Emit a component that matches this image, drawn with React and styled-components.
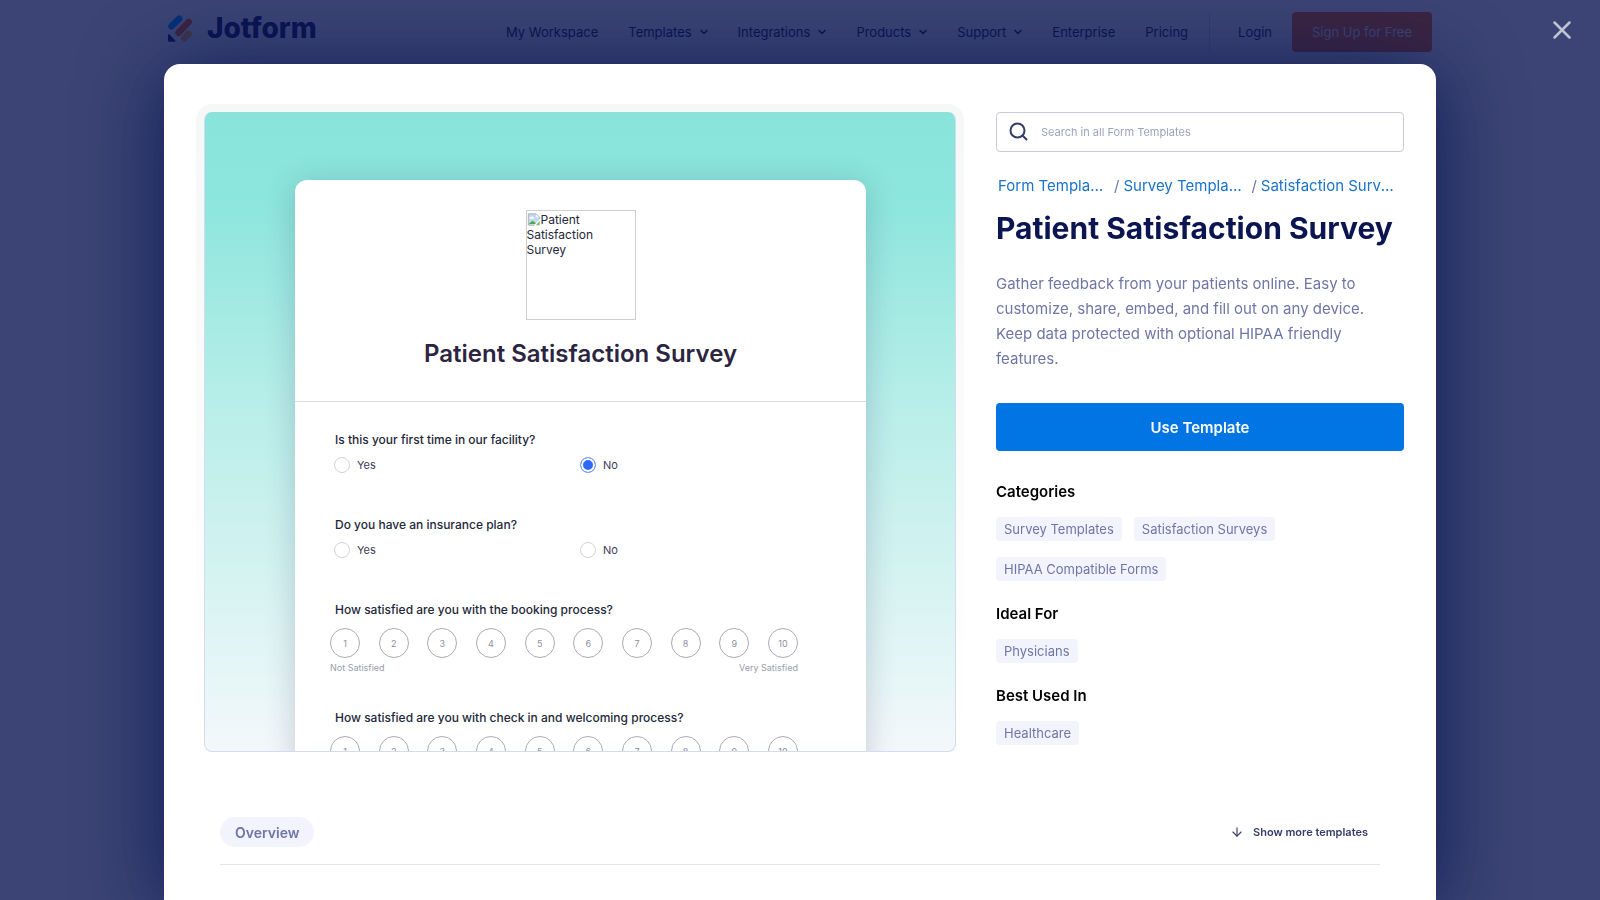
import React from 'react';
import styled, { createGlobalStyle } from 'styled-components';
import { ArrowDown, ChevronDown, X } from 'lucide-react';

const navLinks = [
  { label: 'My Workspace' },
  { label: 'Templates', menu: true },
  { label: 'Integrations', menu: true },
  { label: 'Products', menu: true },
  { label: 'Support', menu: true },
  { label: 'Enterprise' },
  { label: 'Pricing' },
];

const crumbs = ['Form Templates', 'Survey Templates', 'Satisfaction Surveys'];

const tagGroups = [
  {
    title: 'Categories',
    tags: ['Survey Templates', 'Satisfaction Surveys', 'HIPAA Compatible Forms'],
  },
  { title: 'Ideal For', tags: ['Physicians'] },
  { title: 'Best Used In', tags: ['Healthcare'] },
];

const yesNoQuestions = [
  { id: 'first', text: 'Is this your first time in our facility?', answer: 'No' },
  { id: 'plan', text: 'Do you have an insurance plan?', answer: '' },
];

const scaleQuestions = [
  { id: 'booking', text: 'How satisfied are you with the booking process?' },
  {
    id: 'welcome',
    text: 'How satisfied are you with check in and welcoming process?',
  },
];

const Logo = () => (
  <LogoLink href='#home'>
    <svg width='24' height='27' viewBox='0 0 24 27' fill='none'>
      <g strokeWidth='6.500' strokeLinecap='round'>
        <path d='M3.500 11.200 11.300 3.700' stroke='#0099ff' />
        <path d='M10.500 17.800 20.700 7' stroke='#ff6100' />
        <path d='M16.300 23 20.500 18.900' stroke='#ffb629' />
      </g>
      <path d='M0 20v5.400c0 .8.500 1.300 1.300 1.300h5.300c.8 0 1.100-.8.500-1.400L1.500 19.500c-.6-.6-1.500-.2-1.500.5Z' fill='#0a1551' />
    </svg>
    <span>Jotform</span>
  </LogoLink>
);

const BrokenImage = () => (
  <svg width='16' height='16' viewBox='0 0 16 16'>
    <path d='M1.500 1.500h9l4 4V8L9 13.500H1.500Z' fill='#c4d8f5' />
    <path d='M10.500 1.500v4h4Z' fill='#fff' />
    <path d='M3 6.500c0-1 1-1.500 2-1.300.5-1 2.400-.7 2.400.5.800 0 1 .9.500 1.300H3.500Z' fill='#fff' />
    <path d='M1.500 13.500 6 9.500l3 1.500 1 1.500-1.500 1Z' fill='#4fa64a' />
    <path d='M14.500 9.500v5H10Z' fill='#7cbd6c' />
    <path d='M8.500 14.500h-7v-13h9l4 4v2' fill='none' stroke='#a9abb0' />
  </svg>
);

const YesNo = ({ question }) => (
  <Question>
    <legend>{question.text}</legend>
    <Options>
      {['Yes', 'No'].map((option) => (
        <Option key={option}>
          <input
            type='radio'
            name={question.id}
            value={option}
            defaultChecked={question.answer === option}
          />
          {option}
        </Option>
      ))}
    </Options>
  </Question>
);

const Scale = ({ question }) => (
  <Question>
    <legend>{question.text}</legend>
    <ScaleBody>
      <ScaleRow>
        {Array.from({ length: 10 }, (_, i) => (
          <ScaleItem key={i}>
            <input type='radio' name={question.id} value={i + 1} />
            {i + 1}
          </ScaleItem>
        ))}
      </ScaleRow>
      <ScaleEnds>
        <span>Not Satisfied</span>
        <span>Very Satisfied</span>
      </ScaleEnds>
    </ScaleBody>
  </Question>
);

const App = () => {
  return (
    <>
      <GlobalStyle />
      <Header>
        <Logo />
        <Nav>
          {navLinks.map(({ label, menu }) => (
            <a key={label} href='#nav'>
              {label}
              {menu && <ChevronDown size={12} strokeWidth={3} />}
            </a>
          ))}
        </Nav>
        <Account>
          <a href='#login'>Login</a>
          <SignUp type='button'>Sign Up for Free</SignUp>
        </Account>
      </Header>

      <Overlay>
        <Close type='button' aria-label='Close'>
          <X size={30} strokeWidth={2} />
        </Close>
        <Modal role='dialog' aria-label='Patient Satisfaction Survey'>
          <Columns>
            <PreviewFrame>
              <Preview>
                <FormCard>
                  <FormHead>
                    <Picture>
                      <BrokenImage />
                      Patient Satisfaction Survey
                    </Picture>
                    <h2>Patient Satisfaction Survey</h2>
                  </FormHead>
                  <Questions>
                    {yesNoQuestions.map((q) => (
                      <YesNo key={q.id} question={q} />
                    ))}
                    {scaleQuestions.map((q) => (
                      <Scale key={q.id} question={q} />
                    ))}
                  </Questions>
                </FormCard>
              </Preview>
            </PreviewFrame>

            <Details>
              <Search>
                <svg width='20' height='20' viewBox='0 0 20 20' fill='none'>
                  <circle cx='8.500' cy='8.500' r='7' stroke='#343c6a' strokeWidth='2' />
                  <path d='m13.500 13.500 4 4' stroke='#343c6a' strokeWidth='2' strokeLinecap='round' />
                </svg>
                <input
                  type='text'
                  aria-label='Search in all Form Templates'
                  placeholder='Search in all Form Templates'
                />
              </Search>
              <Breadcrumbs>
                {crumbs.map((crumb) => (
                  <li key={crumb}>
                    <a href='#crumb'>{crumb}</a>
                  </li>
                ))}
              </Breadcrumbs>
              <h1>Patient Satisfaction Survey</h1>
              <Description>
                Gather feedback from your patients online. Easy to customize,
                share, embed, and fill out on any device. Keep data protected
                with optional HIPAA friendly features.
              </Description>
              <UseButton type='button'>Use Template</UseButton>
              {tagGroups.map(({ title, tags }) => (
                <TagGroup key={title}>
                  <h3>{title}</h3>
                  <div>
                    {tags.map((tag) => (
                      <Tag key={tag} href='#tag'>
                        {tag}
                      </Tag>
                    ))}
                  </div>
                </TagGroup>
              ))}
            </Details>
          </Columns>

          <TabBar>
            <Tab type='button'>Overview</Tab>
            <MoreButton type='button'>
              <ArrowDown size={14} strokeWidth={2} />
              Show more templates
            </MoreButton>
          </TabBar>
        </Modal>
      </Overlay>
    </>
  );
};

export default App;

const GlobalStyle = createGlobalStyle`
  * {
    box-sizing: border-box;
  }
  body {
    margin: 0;
    overflow: hidden;
    background-color: #fff;
    color: #0a1551;
    font-family: Inter, 'Liberation Sans', sans-serif;
  }
  a {
    color: inherit;
    text-decoration: none;
  }
  button, input {
    font-family: inherit;
  }
  button {
    border: none;
    cursor: pointer;
  }
  h1, h2, h3, p, ul {
    margin: 0;
    padding: 0;
  }
`;

const Header = styled.header`
  display: flex;
  align-items: center;
  height: 64px;
  padding: 0 168px;
  font-size: 13px;
`;

const LogoLink = styled.a`
  display: flex;
  align-items: center;
  gap: 15px;
  height: 56px;
  align-self: flex-start;
  font-size: 28px;
  font-weight: 800;
`;

const Nav = styled.nav`
  display: flex;
  margin-left: auto;
  padding-right: 6px;
  a {
    display: flex;
    align-items: center;
    gap: 8px;
    padding: 0 15px;
  }
  svg {
    margin: 0 -2px;
  }
`;

const Account = styled.div`
  display: flex;
  align-items: center;
  gap: 20px;
  height: 40px;
  padding-left: 28px;
  border-left: 1px solid #d8dcf0;
`;

const SignUp = styled.button`
  height: 40px;
  width: 140px;
  border-radius: 4px;
  background-color: #ff6100;
  color: #fff;
  font-size: 13px;
`;

const Overlay = styled.div`
  position: fixed;
  inset: 0;
  display: flex;
  padding: 64px 164px 0;
  overflow: hidden;
  background-color: rgba(10, 21, 81, 0.8);
`;

const Close = styled.button`
  position: absolute;
  top: 15px;
  right: 23px;
  display: flex;
  padding: 0;
  background: none;
  color: #c0c3d6;
`;

const Modal = styled.div`
  flex: 1;
  min-width: 0;
  padding: 48px 32px 0 40px;
  border-radius: 16px 16px 0 0;
  background-color: #fff;
  box-shadow: 0 8px 80px rgba(10, 21, 81, 0.9);
`;

const Columns = styled.div`
  display: grid;
  grid-template-columns: minmax(0, 1fr) 408px;
  align-items: start;
  gap: 40px;
`;

const PreviewFrame = styled.div`
  margin: -8px -8px 0;
  padding: 8px 8px 0;
  border-radius: 16px 16px 0 0;
  background-image: linear-gradient(#f6f7f7, #fff);
`;

const Preview = styled.div`
  height: 640px;
  padding: 67px 89px 0 90px;
  overflow: hidden;
  border: 1px solid #d5dbee;
  border-top-color: #97ddd8;
  border-radius: 8px;
  background-image: linear-gradient(#88e4da, #8ee6dd 15%, #b8eee9 46%, #f3f8fa);
`;

const FormCard = styled.div`
  min-height: 640px;
  border-radius: 12px 12px 0 0;
  background-color: #fff;
  box-shadow: 0 4px 30px rgba(37, 45, 91, 0.22);
  color: #23283a;
`;

const FormHead = styled.div`
  display: flex;
  flex-direction: column;
  align-items: center;
  padding: 30px 0;
  border-bottom: 1px solid #dadce4;
  h2 {
    margin-top: 16px;
    line-height: 35px;
    font-size: 24px;
    font-weight: 600;
    color: #2c2541;
  }
`;

const Picture = styled.div`
  width: 110px;
  height: 110px;
  border: 1px solid #cfcfcf;
  padding-top: 1px;
  font-size: 12px;
  line-height: 15px;
  svg {
    float: left;
    width: 14px;
    height: 15px;
  }
`;

const Questions = styled.div`
  display: flex;
  flex-direction: column;
  gap: 37px;
  padding: 30px 68px 0 35px;
`;

const Question = styled.fieldset`
  min-width: 0;
  margin: 0;
  padding: 0;
  border: none;
  legend {
    padding: 0 5px;
    font-size: 12px;
    font-weight: 500;
    line-height: 16px;
  }
`;

const Options = styled.div`
  display: grid;
  grid-template-columns: 246px 1fr;
  padding: 8px 4px 7px;
`;

const Option = styled.label`
  display: flex;
  align-items: center;
  gap: 7px;
  height: 17px;
  font-size: 11px;
  color: #3f3a5a;
  input {
    appearance: none;
    width: 16px;
    height: 16px;
    margin: 0;
    border: 1px solid #d0d3dc;
    border-radius: 50%;
  }
  input:checked {
    border-color: #7d9cf5;
    background-color: #2e69ff;
    box-shadow: inset 0 0 0 2px #fff;
  }
`;

const ScaleBody = styled.div`
  padding-top: 10px;
`;

const ScaleRow = styled.div`
  display: flex;
  justify-content: space-between;
`;

const ScaleItem = styled.label`
  display: flex;
  align-items: center;
  justify-content: center;
  width: 30px;
  height: 30px;
  border: 1px solid #a9abb5;
  border-radius: 50%;
  font-size: 9px;
  color: #8d8f9c;
  input {
    position: absolute;
    opacity: 0;
    pointer-events: none;
  }
`;

const ScaleEnds = styled.div`
  display: flex;
  justify-content: space-between;
  padding-top: 4px;
  font-size: 9px;
  line-height: 11px;
  color: #9a9cac;
`;

const Details = styled.div`
  min-width: 0;
  h1 {
    margin-top: 10px;
    font-size: 30px;
    font-weight: 700;
    line-height: 40px;
    white-space: nowrap;
  }
`;

const Search = styled.label`
  display: flex;
  align-items: center;
  gap: 10px;
  height: 40px;
  padding: 0 12px;
  border: 1px solid #c8ccdb;
  border-radius: 4px;
  input {
    flex: 1;
    border: none;
    outline: none;
    font-size: 11px;
  }
  input::placeholder {
    color: #a0a2bd;
  }
`;

const Breadcrumbs = styled.ul`
  display: flex;
  margin-top: 22px;
  padding: 0 2px;
  list-style: none;
  font-size: 15px;
  line-height: 24px;
  color: #6f76a7;
  li {
    display: flex;
    white-space: nowrap;
  }
  li + li::before {
    content: '/';
    padding: 0 4px 0 8px;
  }
  a {
    max-width: 136px;
    overflow: hidden;
    text-overflow: ellipsis;
    color: #1a73c8;
  }
  li:first-child a {
    width: 108px;
  }
  li:nth-child(2) a {
    width: 120px;
  }
`;

const Description = styled.p`
  margin-top: 23px;
  font-size: 15px;
  line-height: 25px;
  color: #6f76a7;
`;

const UseButton = styled.button`
  width: 100%;
  height: 48px;
  margin: 32px 0 29px;
  border-radius: 4px;
  background-color: #0075e3;
  color: #fff;
  font-size: 15px;
  font-weight: 600;
`;

const TagGroup = styled.section`
  margin-bottom: 21px;
  &:last-child {
    margin-bottom: 0;
  }
  h3 {
    font-size: 15px;
    font-weight: 600;
    line-height: 24px;
    color: #000;
  }
  div {
    display: flex;
    flex-wrap: wrap;
    gap: 16px 12px;
    padding-top: 13px;
  }
`;

const Tag = styled.a`
  padding: 0 8px;
  border-radius: 4px;
  background-color: #f3f3fe;
  color: #6f76a7;
  font-size: 13px;
  line-height: 24px;
`;

const TabBar = styled.div`
  display: flex;
  align-items: center;
  justify-content: space-between;
  margin: 65px 24px 0 16px;
  padding-bottom: 17px;
  border-bottom: 1px solid #e3e5ea;
`;

const Tab = styled.button`
  height: 30px;
  padding: 0 15px;
  border-radius: 15px;
  background-color: #f3f3fe;
  color: #6f76a7;
  font-size: 14px;
  font-weight: 600;
`;

const MoreButton = styled.button`
  display: flex;
  align-items: center;
  gap: 9px;
  padding: 0 12px;
  background: none;
  color: #343c6a;
  font-size: 11px;
  font-weight: 600;
`;
